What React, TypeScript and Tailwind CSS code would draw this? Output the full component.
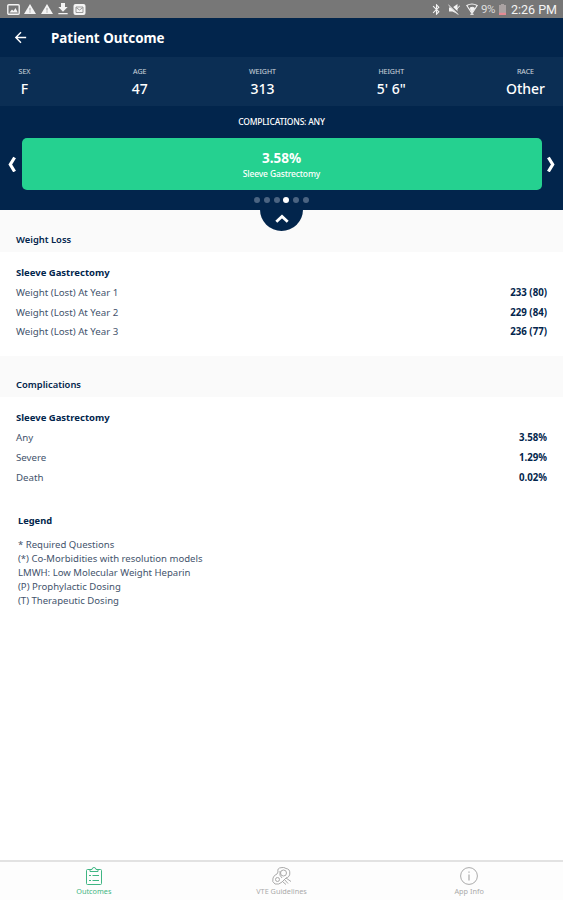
import clsx from 'clsx';
import { MdArrowBack, MdBluetooth, MdFileDownload } from 'react-icons/md';

const stats = [
  { label: 'SEX', value: 'F', width: 'w-[13px]' },
  { label: 'AGE', value: '47', width: 'w-[17px]' },
  { label: 'WEIGHT', value: '313', width: 'w-[28px]' },
  { label: 'HEIGHT', value: '5\' 6"', width: 'w-[29px]' },
  { label: 'RACE', value: 'Other', width: 'w-[39px]' },
];

const weightLoss = [
  { label: 'Weight (Lost) At Year 1', value: '233 (80)' },
  { label: 'Weight (Lost) At Year 2', value: '229 (84)' },
  { label: 'Weight (Lost) At Year 3', value: '236 (77)' },
];

const complications = [
  { label: 'Any', value: '3.58%' },
  { label: 'Severe', value: '1.29%' },
  { label: 'Death', value: '0.02%' },
];

const legend = [
  '* Required Questions',
  '(*) Co-Morbidities with resolution models',
  'LMWH: Low Molecular Weight Heparin',
  '(P) Prophylactic Dosing',
  '(T) Therapeutic Dosing',
];

function WarningIcon({ className }: { className?: string }) {
  return (
    <svg viewBox="0 0 12 10" className={clsx('h-[10px] w-3', className)}>
      <path d="M6 0L12 10H0Z" fill="currentColor" />
      <path d="M6 3.8v2.8M6 7.4v1.2" stroke="#999999" />
    </svg>
  );
}

function StatusBar() {
  return (
    <div className="flex h-[18px] items-center justify-between bg-[#777777] pl-[7px] pr-[6px] font-[Roboto,sans-serif] text-[#f4f4f4]">
      <div className="flex items-center">
        <svg viewBox="0 0 13 11" className="mr-[4px] h-[11px] w-[13px]">
          <rect x="0.8" y="0.8" width="11.4" height="9.4" rx="1" fill="none" stroke="currentColor" strokeWidth="1.4" />
          <path d="M2.5 8.5L5 5.5L6.5 7L8.5 4L10.8 8.5Z" fill="currentColor" />
        </svg>
        <WarningIcon />
        <WarningIcon className="ml-[5px]" />
        <MdFileDownload className="ml-[2px] size-[16px]" />
        <svg viewBox="0 0 13 11" className="ml-[2px] h-[11px] w-[13px]">
          <rect x="0.5" y="0" width="12" height="11" rx="2" fill="currentColor" />
          <path d="M3 3h7v5.5H3zM3 3.5l3.5 2.5L10 3.5" fill="none" stroke="#999999" />
        </svg>
      </div>
      <div className="flex items-center">
        <MdBluetooth className="mr-[5px] size-[13px]" />
        <svg viewBox="0 0 12 11" className="mr-[6px] h-[11px] w-3">
          <path d="M1 3.5h3.5L9.5 0v10L4.5 7.5H1z" fill="currentColor" />
          <path d="M1 0.5L11.5 10.5" stroke="#777777" strokeWidth="2" />
          <path d="M0.5 1L10.5 10.8M8 6L12 1.5" stroke="currentColor" />
        </svg>
        <svg viewBox="0 0 12 12" className="mr-[3px] size-3" fill="none" stroke="currentColor">
          <path d="M0.8 2.5Q6 -0.5 11.2 2.5L6 10.5Z" strokeWidth="1.1" />
          <path d="M4 5Q6 3.5 8.5 5L6 9Z" fill="currentColor" />
          <path d="M4.3 11.3h3.4" />
        </svg>
        <span className="text-[11.5px] leading-[18px] tracking-[-0.5px] text-[#dedede]">9%</span>
        <svg viewBox="0 0 7 11" className="ml-[4px] mr-[5px] h-[11px] w-[7px]">
          <path d="M2 0h3v1h2v10H0V1h2z" fill="#aaa2a2" />
          <path d="M0 8.8h7V11H0z" fill="#e58b94" />
        </svg>
        <span className="text-[12.5px] leading-[19px]">2:26 PM</span>
      </div>
    </div>
  );
}

function SectionTitle({ title, className }: { title: string; className?: string }) {
  return (
    <h2 className={clsx('flex items-end bg-[#fafafa] px-4 text-[9.4px] font-semibold leading-3', className)}>
      {title}
    </h2>
  );
}

function ResultList({ rows }: { rows: { label: string; value: string }[] }) {
  return (
    <section className="px-4 pt-[11px]">
      <h3 className="text-[9.5px] font-bold leading-[20px]">Sleeve Gastrectomy</h3>
      {rows.map((row) => (
        <div key={row.label} className="flex justify-between text-[9.7px] leading-[19.7px]">
          <span className="text-[#43536c]">{row.label}</span>
          <span className="font-bold">{row.value}</span>
        </div>
      ))}
    </section>
  );
}

function Chevron({ className }: { className?: string }) {
  return (
    <svg viewBox="0 0 8 16" className={clsx('h-4 w-2', className)} fill="none" stroke="white" strokeWidth="3.2">
      <path d="M6.6 1.5L2.3 8.5L6.6 15.5" />
    </svg>
  );
}

function BottomNav() {
  return (
    <nav className="flex h-10 border-t-2 border-[#e2e2e2] bg-[#fdfdfd] text-[7.3px] leading-[9px] text-[#aaaaaa]">
      <div className="flex flex-1 flex-col items-center pt-[5px] text-[#3fb583]">
        <svg viewBox="0 0 16 18" className="h-[18px] w-4" fill="none" stroke="currentColor">
          <path d="M4 2.5H1.5a1 1 0 0 0-1 1v13a1 1 0 0 0 1 1h13a1 1 0 0 0 1-1v-13a1 1 0 0 0-1-1H12" />
          <path d="M4 4.5v-2h2Q6 .5 8 .5t2 2h2v2z" />
          <path d="M3 8.5h2M6.5 8.5H13M3 13.5h2M6.5 13.5H13" />
        </svg>
        <span className="mt-[2px]">Outcomes</span>
      </div>
      <div className="flex flex-1 flex-col items-center pt-[5px]">
        <svg viewBox="0 0 20 18" className="h-[18px] w-5" fill="none" stroke="currentColor">
          <path d="M6 5Q5 1 9 .7Q12-.2 14 1.5Q18 2 17.8 6Q18 10 14 11Q12 13 10 15Q7 18 3 17Q-.5 15 1 11Q2 8 5 7Z" />
          <circle cx="11.5" cy="6" r="3" />
          <circle cx="5.5" cy="12.5" r="2" />
          <path d="M8 4Q7 9 10 11M12 12l4 4.5M14 11l5 3.5M11 15l3 2.5" />
        </svg>
        <span className="mt-[2px]">VTE Guidelines</span>
      </div>
      <div className="flex flex-1 flex-col items-center pt-[5px]">
        <svg viewBox="0 0 18 18" className="size-[18px]" fill="none" stroke="currentColor">
          <circle cx="9" cy="9" r="8.4" />
          <path d="M9 7.5v6M9 4.5v1.3" strokeWidth="1.2" />
        </svg>
        <span className="mt-[2px]">App Info</span>
      </div>
    </nav>
  );
}

export default function App() {
  return (
    <div className="flex h-[900px] w-[563px] flex-col overflow-hidden bg-white font-['Noto_Sans',sans-serif] text-[#02254c]">
      <StatusBar />
      <header className="flex h-[39px] items-center bg-[#02254c] pl-[12px] text-white">
        <MdArrowBack className="size-[17px]" />
        <h1 className="ml-[22px] text-[13.4px] font-bold leading-5">Patient Outcome</h1>
      </header>
      <div className="flex h-[49px] justify-between bg-[#0b2e54] px-[18px] pt-[9px] text-white">
        {stats.map((stat) => (
          <div key={stat.label} className={clsx('flex flex-col items-center whitespace-nowrap', stat.width)}>
            <span className="text-[7px] leading-[11px] text-white/80">{stat.label}</span>
            <span className="text-[14px] font-medium leading-[23px]">{stat.value}</span>
          </div>
        ))}
      </div>
      <div className="relative flex h-[104px] flex-col items-center bg-[#02254c] pt-[9px] text-white">
        <p className="text-[8.5px] font-medium leading-[14px] tracking-[-0.2px]">COMPLICATIONS: ANY</p>
        <div className="mt-[9px] flex w-full items-center justify-between px-[8px]">
          <Chevron />
          <div className="flex h-[52px] w-[520px] flex-col items-center justify-center rounded-[5px] bg-[#25d190] pt-px">
            <span className="text-[13.5px] font-bold leading-[18px]">3.58%</span>
            <span className="text-[8.5px] font-medium leading-[14px] tracking-[-0.15px]">Sleeve Gastrectomy</span>
          </div>
          <Chevron className="-scale-x-100" />
        </div>
        <div className="mt-[7px] flex gap-[3.8px]">
          {[0, 1, 2, 3, 4, 5].map((dot) => (
            <span key={dot} className={clsx('size-[6px] rounded-full', dot === 3 ? 'bg-white' : 'bg-[#4b6482]')} />
          ))}
        </div>
        <button className="absolute left-[260px] top-[103px] flex h-[22px] w-[43px] items-center justify-center rounded-b-full bg-[#02254c]">
          <svg viewBox="0 0 14 9" className="-mt-1 h-[9px] w-[14px]" fill="none" stroke="white" strokeWidth="2.8">
            <path d="M1.3 7.8L7 2.4L12.7 7.8" />
          </svg>
        </button>
      </div>
      <SectionTitle title="Weight Loss" className="h-[42px] pb-[6px]" />
      <ResultList rows={weightLoss} />
      <SectionTitle title="Complications" className="mt-[14px] h-[41px] pb-[6px]" />
      <ResultList rows={complications} />
      <section className="grow px-[18px] pt-[25px]">
        <h3 className="text-[9.3px] font-bold leading-[18px]">Legend</h3>
        <ul className="mt-[8px] text-[9.55px] leading-[14px] text-[#43536c]">
          {legend.map((line) => (
            <li key={line}>{line}</li>
          ))}
        </ul>
      </section>
      <BottomNav />
    </div>
  );
}
